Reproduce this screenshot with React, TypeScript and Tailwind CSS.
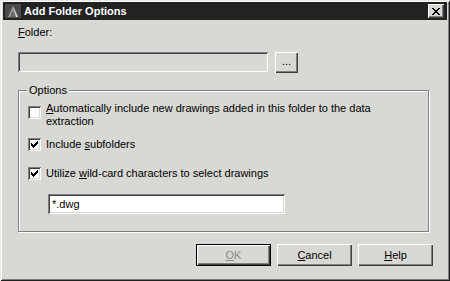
const face = "bg-[#d8d8d4]";

function U({ children }: { children: string }) {
  return <span className="underline underline-offset-[1px]">{children}</span>;
}

// classic 7x7 check glyph, row by row
const checkRows = [
  [6, 1],
  [5, 2],
  [0, 1, 4, 3],
  [0, 2, 3, 3],
  [0, 5],
  [1, 3],
  [2, 1],
];

function Check({ checked }: { checked?: boolean }) {
  return (
    <div className="w-[13px] h-[13px] shrink-0 bg-white shadow-[inset_1px_1px_#808080,inset_-1px_-1px_#ffffff,inset_2px_2px_#404040,inset_-2px_-2px_#d8d8d4] flex items-center justify-center">
      {checked && (
        <svg width="7" height="7" viewBox="0 0 7 7" shapeRendering="crispEdges">
          {checkRows.map((r, y) => (
            <g key={y}>
              <rect x={r[0]} y={y} width={r[1]} height="1" fill="#000" />
              {r.length > 2 && <rect x={r[2]} y={y} width={r[3]} height="1" fill="#000" />}
            </g>
          ))}
        </svg>
      )}
    </div>
  );
}

function Button({ children, isDefault, disabled }: { children: React.ReactNode; isDefault?: boolean; disabled?: boolean }) {
  return (
    <div
      className={
        "w-[75px] h-[22px] flex items-center justify-center " +
        (isDefault
          ? "border border-black shadow-[inset_1px_1px_#ffffff,inset_-1px_-1px_#404040,inset_-2px_-2px_#808080]"
          : "shadow-[inset_1px_1px_#ffffff,inset_-1px_-1px_#404040,inset_-2px_-2px_#808080]") +
        (disabled ? " text-[#8a8a8a]" : " text-black")
      }
    >
      {children}
    </div>
  );
}

export default function App() {
  return (
    <div
      className={`w-[450px] h-[281px] ${face} relative overflow-hidden font-['Liberation_Sans',Arial,sans-serif] text-[11px] leading-[13px] text-black shadow-[inset_1px_1px_#e8e8e4,inset_-1px_-1px_#202020,inset_2px_2px_#ffffff,inset_-2px_-2px_#808080]`}
    >
      <div className="px-[3px] pt-[2px]">
        {/* title bar */}
        <div className="h-[18px] bg-[#222222] flex items-center pl-[2px] pr-[3px]">
          <svg width="16" height="14" viewBox="0 0 16 14" className="shrink-0">
            <rect x="0" y="0" width="16" height="14" fill="#4a4a4a" />
            <path d="M3 13 L8 2 L13 13 Z" fill="#9a9a9a" />
            <path d="M5 13 L8 6 L11 13 Z" fill="#666" />
            <path d="M8 2 L13 13 L11 13 Z" fill="#cfcfcf" />
          </svg>
          <span className="ml-[3px] text-white font-bold text-[11px]">Add Folder Options</span>
          <div className="ml-auto w-[16px] h-[14px] bg-[#d8d8d4] shadow-[inset_1px_1px_#ffffff,inset_-1px_-1px_#404040,inset_-2px_-2px_#808080] flex items-center justify-center">
            <svg width="8" height="7" viewBox="0 0 8 7" shapeRendering="crispEdges">
              <path d="M0 0h2l2 2.5l2 -2.5h2l-3 3.5l3 3.5h-2l-2 -2.5l-2 2.5h-2l3 -3.5z" fill="#000" />
            </svg>
          </div>
        </div>

        {/* body */}
        <div className="pl-[15px]">
          <div className="mt-[6px]">
            <U>F</U>older:
          </div>

          <div className="flex items-start mt-[13px]">
            <div className="w-[250px] h-[20px] bg-[#d8d8d4] shadow-[inset_1px_1px_#808080,inset_-1px_-1px_#ffffff,inset_2px_2px_#404040,inset_-2px_-2px_#d8d8d4]" />
            <div className="ml-[7px] w-[23px] h-[21px] flex items-center justify-center shadow-[inset_1px_1px_#ffffff,inset_-1px_-1px_#404040,inset_-2px_-2px_#808080] pb-[3px]">
              ...
            </div>
          </div>

          {/* Options group */}
          <div className="relative mt-[17px] w-[411px] h-[142px] border border-[#808080] shadow-[inset_1px_1px_#ffffff,1px_1px_#ffffff] px-[9px] pt-[11px]">
            <span className={`absolute left-[8px] top-[-7px] px-[2px] ${face}`}>Options</span>

            <div className="flex items-start">
              <div className="mt-[4px]">
                <Check />
              </div>
              <div className="ml-[5px]">
                <U>A</U>utomatically include new drawings added in this folder to the data
                <br />
                extraction
              </div>
            </div>

            <div className="flex items-center mt-[10px] h-[13px]">
              <Check checked />
              <div className="ml-[5px]">
                Include <U>s</U>ubfolders
              </div>
            </div>

            <div className="flex items-center mt-[16px] h-[13px]">
              <Check checked />
              <div className="ml-[5px]">
                Utilize <U>w</U>ild-card characters to select drawings
              </div>
            </div>

            <div className="ml-[20px] mt-[14px] w-[237px] h-[20px] bg-white shadow-[inset_1px_1px_#808080,inset_-1px_-1px_#ffffff,inset_2px_2px_#404040,inset_-2px_-2px_#d8d8d4] flex items-center pl-[4px]">
              *.dwg
            </div>
          </div>

          <div className="flex justify-end gap-[6px] mt-[12px] pr-[14px]">
            <Button isDefault disabled>
              <U>O</U>K
            </Button>
            <Button>
              <U>C</U>ancel
            </Button>
            <Button>
              <U>H</U>elp
            </Button>
          </div>
        </div>
      </div>
    </div>
  );
}
